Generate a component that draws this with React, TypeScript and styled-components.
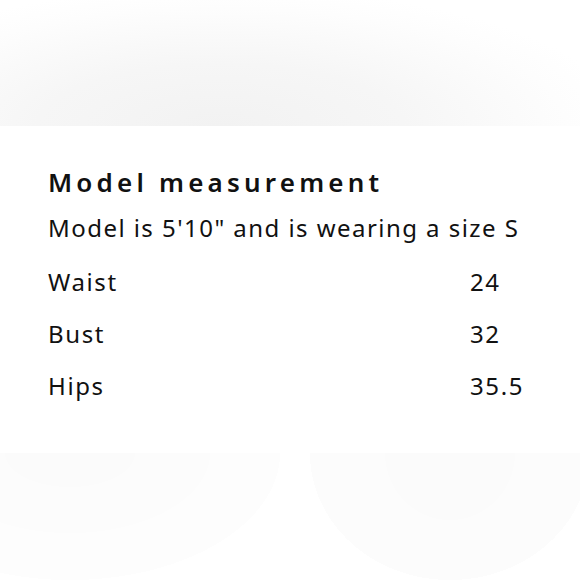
import React from "react";
import styled, { createGlobalStyle } from "styled-components";

const rows = [
  { label: "Waist", value: "24" },
  { label: "Bust", value: "32" },
  { label: "Hips", value: "35.5" },
];

const App: React.FC = () => {
  return (
    <>
      <GlobalStyle />
      <Page>
        <TopShade />
        <Card>
          <Title>Model measurement</Title>
          <Subtitle>Model is 5&apos;10&quot; and is wearing a size S</Subtitle>
          <Table>
            {rows.map((row) => (
              <Row key={row.label}>
                <Cell>{row.label}</Cell>
                <Cell>{row.value}</Cell>
              </Row>
            ))}
          </Table>
        </Card>
        <BottomShade />
      </Page>
    </>
  );
};

const GlobalStyle = createGlobalStyle`
  html, body {
    margin: 0;
    padding: 0;
    background: #fff;
  }
`;

const Page = styled.div`
  display: flex;
  flex-direction: column;
  height: 580px;
  width: 580px;
  overflow: hidden;
  font-family: "Noto Sans", "Open Sans", sans-serif;
  color: #111;
`;

const TopShade = styled.div`
  height: 126px;
  flex-shrink: 0;
  background: radial-gradient(
    ellipse 70% 110% at 38% 100%,
    #f2f2f2 0%,
    #f6f6f6 45%,
    #fdfdfd 85%,
    #fff 100%
  );
`;

const Card = styled.div`
  display: flex;
  flex-direction: column;
  padding: 40px 0 0 48px;
  height: 327px;
  box-sizing: border-box;
  background: #fff;
`;

const Title = styled.h2`
  margin: 0;
  font-size: 26px;
  line-height: 33px;
  font-weight: 600;
  letter-spacing: 4.2px;
`;

const Subtitle = styled.p`
  margin: 13px 0 0;
  font-size: 24px;
  line-height: 32px;
  font-weight: 400;
  letter-spacing: 1.45px;
`;

const Table = styled.div`
  display: flex;
  flex-direction: column;
  gap: 20px;
  margin-top: 22px;
`;

const Row = styled.div`
  display: grid;
  grid-template-columns: 422px auto;
`;

const Cell = styled.span`
  font-size: 24px;
  line-height: 32px;
  letter-spacing: 1.6px;
`;

const BottomShade = styled.div`
  flex: 1;
  background:
    radial-gradient(ellipse 65px 34px at 70px 0, #fbfbfb 0 100%, transparent 100%),
    radial-gradient(ellipse 65px 67px at 450px 0, #fbfbfb 0 100%, transparent 100%),
    radial-gradient(ellipse 140px 80px at 70px 0, #fcfcfc 0 100%, transparent 100%),
    radial-gradient(ellipse 140px 127px at 450px 0, #fcfcfc 0 100%, transparent 100%),
    radial-gradient(ellipse 210px 127px at 70px 0, #fdfdfd 0 100%, transparent 100%),
    #fff;
`;

export default App;
